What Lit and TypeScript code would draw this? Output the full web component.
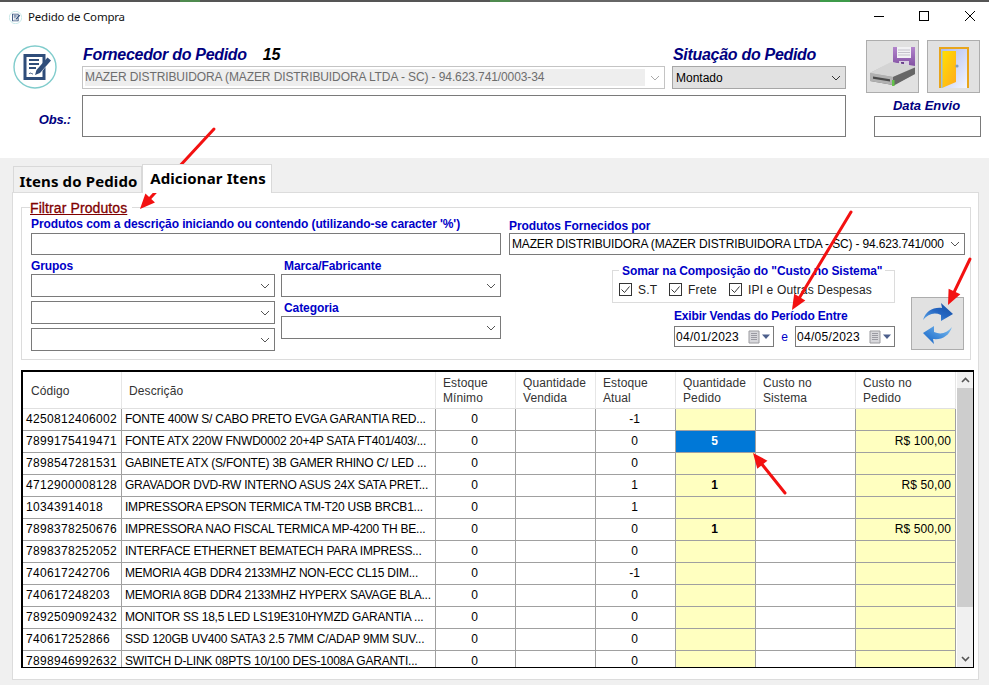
import { LitElement, html, css, svg } from "lit";
import { customElement } from "lit/decorators.js";

const chevron = (c = "#555") => html`<svg class="chev" width="10" height="6" viewBox="0 0 10 6"><path d="M1 1l4 4 4-4" fill="none" stroke=${c} stroke-width="1"/></svg>`;

const docIcon = (size: number) => html`<svg width=${size} height=${size} viewBox="0 0 44 44">
  <circle cx="22" cy="22" r="21" fill="#fff" stroke="#80cccc" stroke-width="1.4"/>
  <path d="M10.500 9h22v7l-3 3.500V12H13.500v20h16v-6l3-4v13h-22z" fill="#2f4d7a"/>
  <path d="M16 15h10M16 19h10M16 23h7" stroke="#2f4d7a" stroke-width="2"/>
  <path d="M22 30l1.500-5 11-12.500 3.500 3-11 12.500z" fill="#2f4d7a"/>
  <path d="M16 29c1.500-2 2.500 0 4 0" stroke="#2f4d7a" fill="none"/>
</svg>`;

const floppy = html`<svg width="53" height="53" viewBox="0 0 53 53">
  <defs>
    <linearGradient id="fp" x1="0" y1="0" x2="0" y2="1"><stop offset="0" stop-color="#b284cc"/><stop offset="1" stop-color="#7b4a9c"/></linearGradient>
    <linearGradient id="dr" x1="0" y1="0" x2="0" y2="1"><stop offset="0" stop-color="#e8e8e8"/><stop offset=".55" stop-color="#a9a9a9"/><stop offset="1" stop-color="#5e5e5e"/></linearGradient>
  </defs>
  <path d="M27 7h22v22H27z" fill="url(#fp)"/>
  <path d="M31 7h14v11H31z" fill="#f2f2f4"/>
  <path d="M32 10h12M32 12.500h12M32 15h12" stroke="#b9b6c2" stroke-width=".8"/>
  <path d="M33 21h10v8H33z" fill="#d8d0e0"/><path d="M35 22h3v6h-3z" fill="#6a3f8c"/>
  <path d="M4 33l21-11 24 4v8L27 45 4 41z" fill="url(#dr)"/>
  <path d="M4 33l21-11 24 5-22 10z" fill="#d4d4d4"/>
  <path d="M4 33l23 4v8L4 41z" fill="#b0b0b0"/>
  <path d="M27 37l22-9.500v6.500L27 46z" fill="#666"/>
  <path d="M7 36.500l17 2.800v2.200L7 38.800z" fill="#4a4a4a"/>
  <path d="M26 40h2.500v6H26z" fill="#62c24a"/>
</svg>`;

const door = html`<svg width="53" height="53" viewBox="0 0 53 53">
  <defs>
    <linearGradient id="sky" x1="0" y1="0" x2="1" y2="1"><stop offset="0" stop-color="#a9b8f0"/><stop offset="1" stop-color="#f4f6ff"/></linearGradient>
    <linearGradient id="dp" x1="0" y1="0" x2="1" y2="1"><stop offset="0" stop-color="#ffe000"/><stop offset="1" stop-color="#ffa820"/></linearGradient>
  </defs>
  <path d="M13 8h28v40H13z" fill="url(#sky)"/>
  <path d="M12 7h30v41h-2V9H14v39h-2z" fill="#e8a51c"/>
  <path d="M15 11l14 0v31l-14 6z" fill="url(#dp)"/>
  <path d="M14 11h1.500v37H14z" fill="#9fc0dc"/>
  <circle cx="30" cy="26" r="1.600" fill="#7f9ec0"/>
</svg>`;

const refresh = html`<svg width="53" height="53" viewBox="0 0 53 53">
  <defs>
    <linearGradient id="ra" x1="0" y1="1" x2="1" y2="0"><stop offset="0" stop-color="#5ea8ea"/><stop offset=".5" stop-color="#2566c2"/><stop offset="1" stop-color="#154c9e"/></linearGradient>
    <linearGradient id="rb" x1="1" y1="0" x2="0" y2="1"><stop offset="0" stop-color="#7fc0f2"/><stop offset="1" stop-color="#0f5fc4"/></linearGradient>
  </defs>
  <path d="M12 23C15 14 22 10 31 11L30 6 42 17 30 24 30 18C23 15 17 17 12 23Z" fill="url(#ra)"/>
  <path d="M41 30C38 39 31 43 22 42L23 47 12 36 23 29 23 35C30 38 36 36 41 30Z" fill="url(#rb)"/>
</svg>`;

const calendar = html`<svg width="23" height="14" viewBox="0 0 23 14">
  <path d="M1 1h10v12H1z" fill="#d8d8dc" stroke="#9c9ca0"/>
  <path d="M3 3.500h6M3 5.500h6M3 7.500h6M3 9.500h6" stroke="#9a9aa2"/>
  <path d="M14 4.500h8l-4 4.500z" fill="#4c5f8c"/>
</svg>`;

const rows: string[][] = [
  ["4250812406002", "FONTE 400W S/ CABO PRETO EVGA GARANTIA RED...", "0", "", "-1", "", "", ""],
  ["7899175419471", "FONTE ATX 220W FNWD0002 20+4P SATA FT401/403/...", "0", "", "0", "5", "", "R$ 100,00"],
  ["7898547281531", "GABINETE ATX (S/FONTE) 3B GAMER RHINO C/ LED ...", "0", "", "0", "", "", ""],
  ["4712900008128", "GRAVADOR DVD-RW INTERNO ASUS 24X SATA PRET...", "0", "", "1", "1", "", "R$ 50,00"],
  ["10343914018", "IMPRESSORA EPSON TERMICA TM-T20 USB BRCB1...", "0", "", "1", "", "", ""],
  ["7898378250676", "IMPRESSORA NAO FISCAL TERMICA MP-4200 TH BE...", "0", "", "0", "1", "", "R$ 500,00"],
  ["7898378252052", "INTERFACE ETHERNET BEMATECH PARA IMPRESS...", "0", "", "0", "", "", ""],
  ["740617242706", "MEMORIA 4GB DDR4 2133MHZ NON-ECC CL15 DIM...", "0", "", "-1", "", "", ""],
  ["740617248203", "MEMORIA 8GB DDR4 2133MHZ HYPERX SAVAGE BLA...", "0", "", "0", "", "", ""],
  ["7892509092432", "MONITOR SS 18,5 LED LS19E310HYMZD GARANTIA ...", "0", "", "0", "", "", ""],
  ["740617252866", "SSD 120GB UV400 SATA3 2.5 7MM C/ADAP 9MM SUV...", "0", "", "0", "", "", ""],
  ["7898946992632", "SWITCH D-LINK 08PTS 10/100 DES-1008A GARANTI...", "0", "", "0", "", "", ""],
];

const heads: [string, string][] = [
  ["Código", ""], ["Descrição", ""], ["Estoque", "Mínimo"], ["Quantidade", "Vendida"],
  ["Estoque", "Atual"], ["Quantidade", "Pedido"], ["Custo no", "Sistema"], ["Custo no", "Pedido"],
];

const arrow = (x1: number, y1: number, x2: number, y2: number) => {
  const a = Math.atan2(y2 - y1, x2 - x1);
  const L = 15, W = 6.5;
  const bx = x2 - Math.cos(a) * L, by = y2 - Math.sin(a) * L;
  const nx = -Math.sin(a) * W, ny = Math.cos(a) * W;
  return svg`<line x1=${x1} y1=${y1} x2=${bx} y2=${by} stroke="#f31111" stroke-width="3" stroke-linecap="round"/>
    <polygon points="${x2},${y2} ${bx + nx},${by + ny} ${bx - nx},${by - ny}" fill="#f31111"/>`;
};

@customElement("app-root")
export class AppRoot extends LitElement {
  static styles = css`
    :host { display: block; position: relative; width: 989px; height: 685px; overflow: hidden; background: #f0f0f0; font-family: "Liberation Sans", Arial, sans-serif; font-size: 12px; color: #000; }
    .strip { height: 2px; background: linear-gradient(90deg, #555 0 180px, #4f8a4f 180px 200px, #555 200px 490px, #4f8a4f 490px 510px, #666 510px 820px, #3e9a4a 820px 850px, #555 850px 100%); }
    .titlebar { height: 31px; background: #fff; display: flex; align-items: center; padding-left: 9px; font-family: "Noto Sans", sans-serif; font-size: 11.5px; color: #111; }
    .titlebar .t { margin: 0 0 2px 6px; letter-spacing: -.2px; }
    .ctrls { margin-left: auto; display: flex; }
    .ctrls svg { display: block; width: 46px; height: 31px; }
    .header { height: 125px; background: #fff; display: flex; align-items: flex-start; padding-top: 7px; box-sizing: border-box; }
    .hgrid { width: 846px; display: grid; grid-template-columns: 82px 583px 181px; grid-template-rows: 26px 23px 48px; }
    .logo { grid-column: 1; grid-row: 1 / 3; align-self: end; margin-left: 13px; height: 44px; }
    .logo svg { display: block; }
    .hl { font-weight: bold; font-style: italic; font-size: 16px; letter-spacing: -.3px; color: #000080; align-self: end; line-height: 22px; padding-left: 1px; }
    .hl b { color: #000; margin-left: 16px; }
    .st { margin-left: 7px; grid-column: 3; grid-row: 1; white-space: nowrap; }
    .f1 { grid-column: 2; grid-row: 1; }
    .sup { grid-column: 2; grid-row: 2; height: 23px; box-sizing: border-box; border: 1px solid #c4c4c4; display: flex; align-items: center; color: #6d6d6d; padding: 2px; position: relative; letter-spacing: -.1px; }
    .sup span { flex: 1; background: #eee; height: 17px; line-height: 17px; white-space: nowrap; overflow: hidden; margin-right: 17px; }
    .sit { grid-column: 3; grid-row: 2; margin-left: 7px; height: 23px; box-sizing: border-box; border: 1px solid #a6a6a6; background: #e1e1e1; display: flex; align-items: center; padding-left: 3px; }
    .chev { margin-left: auto; margin-right: 4px; flex: none; }
    .sup .chev { position: absolute; right: 4px; margin: 0; }
    .obsl { grid-column: 1; grid-row: 3; align-self: center; justify-self: end; margin-right: 11px; font-weight: bold; font-style: italic; font-size: 13px; letter-spacing: -.2px; color: #000080; margin-top: 12px; }
    .obs { grid-column: 2 / 4; grid-row: 3; margin-top: 6px; border: 1px solid #7a7a7a; box-sizing: border-box; background: #fff; }
    .hright { margin-left: 20px; width: 115px; }
    .btns { display: flex; gap: 8px; }
    .btn { width: 53px; height: 53px; box-sizing: border-box; background: #e1e1e1; border: 1px solid #adadad; display: block; flex: none; }
    .btn svg { display: block; margin: -1px; }
    .de { font-weight: bold; font-style: italic; font-size: 13px; color: #000080; text-align: center; line-height: 25px; height: 23px; margin-left: 7px; width: 107px; }
    .deb { width: 107px; height: 21px; box-sizing: border-box; border: 1px solid #7a7a7a; margin-left: 8px; background: #fff; }
    .tabs { display: flex; align-items: flex-end; height: 34px; padding-left: 13px; }
    .tab { font-family: "Noto Sans", sans-serif; font-weight: bold; font-size: 15px; letter-spacing: .12px; box-sizing: border-box; border: 1px solid #d9d9d9; border-bottom: 0; text-align: center; color: #000; padding-left: 2px; }
    .tab.off { width: 129px; height: 26px; line-height: 28px; background: #f0f0f0; }
    .tab.on { width: 130px; height: 29px; line-height: 26px; background: #fff; margin-bottom: -1px; position: relative; z-index: 1; }
    .panel { margin-left: 12px; width: 967px; height: 488px; box-sizing: border-box; border: 1px solid #dcdcdc; background: #fff; padding: 14px 0 0 8px; }
    .box { border: 1px solid #dcdcdc; box-sizing: border-box; }
    .legend { background: #fff; width: fit-content; }
    .filter { width: 950px; height: 153px; padding-left: 9px; }
    .legend.lf { margin-top: -8px; height: 16px; line-height: 17px; color: #800000; font-size: 14px; letter-spacing: .1px; -webkit-text-stroke: .3px #800000; text-decoration: underline; padding-right: 5px; margin-left: -1px; }
    .fg { display: grid; grid-template-columns: 470px 456px; column-gap: 8px; }
    .bl { color: #0000c8; font-weight: bold; font-size: 12px; letter-spacing: -.09px; white-space: nowrap; }
    .l1 { height: 17px; line-height: 16px; }
    .l2 { height: 19px; line-height: 23px; padding-left: 3px; }
    .l2.nopad { padding-left: 0; }
    .lr { height: 17px; line-height: 20px; }
    .inp { height: 22px; border: 1px solid #7a7a7a; box-sizing: border-box; background: #fff; }
    .combo { height: 23px; border: 1px solid #7a7a7a; box-sizing: border-box; background: #fff; display: flex; align-items: center; white-space: nowrap; overflow: hidden; }
    .combo.g { margin-bottom: 4px; }
    .combo.fp { height: 22px; padding-left: 2px; font-size: 12px; letter-spacing: -.16px; }
    .combo.fp span { flex: 1; white-space: nowrap; }
    .combo.fp .chev { margin-left: 4px; }
    .two { display: grid; grid-template-columns: 244px 220px; column-gap: 6px; }
    .lower { display: flex; padding-left: 103px; }
    .lc { width: 283px; }
    .somar { margin-top: 15px; height: 33px; width: 283px; padding-left: 6px; }
    .legend.ls { margin-top: -8px; height: 16px; line-height: 16px; padding: 0 3px; margin-bottom: 4px; }
    .checks { display: grid; grid-template-columns: 50px 60px auto; letter-spacing: .15px; }
    .ck { display: flex; gap: 6px; align-items: center; height: 13px; white-space: nowrap; color: #222; }
    .ck svg { display: block; flex: none; }
    .ex { height: 23px; line-height: 26px; padding-left: 62px; letter-spacing: -.17px; }
    .dates { display: flex; align-items: center; padding-left: 62px; }
    .date { width: 100px; height: 21px; box-sizing: border-box; border: 1px solid #7a7a7a; display: flex; align-items: center; padding-left: 1px; font-size: 12px; letter-spacing: .3px; }
    .date svg { margin-left: auto; margin-right: 2px; }
    .e { width: 21px; text-align: center; color: #0000c8; }
    .ref { margin: 42px 0 0 16px; }
    .table { margin-top: 10px; width: 953px; height: 298px; box-sizing: border-box; border-style: solid; border-color: #000; border-width: 2px 1px 1px 2px; display: flex; overflow: hidden; background: #fff; }
    .grid { width: 933px; flex: none; overflow: hidden; }
    .row { display: grid; grid-template-columns: 99px 314px 80px 80px 80px 80px 100px 100px; height: 22px; }
    .row.head { height: 37px; }
    .c { box-sizing: border-box; border-right: 1px solid #a0a0a0; border-bottom: 1px solid #a0a0a0; line-height: 21px; white-space: nowrap; overflow: hidden; }
    .head .c { border-right-color: #e6e6e6; border-bottom-color: #e0e0e0; color: #333; line-height: 15px; padding: 2px 0 0 7px; display: flex; flex-direction: column; justify-content: center; letter-spacing: .1px; }
    .head .c:first-child { padding-left: 8px; }
    .c.code { padding-left: 3px; letter-spacing: .33px; }
    .c.desc { padding-left: 3px; letter-spacing: -.22px; }
    .c.num { text-align: center; padding-right: 2px; }
    .c.y { background: #ffffc0; }
    .c.qty { text-align: center; font-weight: bold; padding-right: 2px; }
    .c.sel { background: #0078d7; color: #fff; }
    .c.mon { text-align: right; padding-right: 4px; letter-spacing: .1px; }
    .sb { flex: 1; border-left: 1px solid #fff; background: #f0f0f0; display: flex; flex-direction: column; }
    .sbb { height: 16px; flex: none; display: flex; align-items: center; justify-content: center; }
    .thumb { height: 219px; background: #cdcdcd; flex: none; }
    .sbf { flex: 1; }
    .arrows { position: absolute; left: 0; top: 0; pointer-events: none; }
  `;

  private cell(r: string[], i: number) {
    const v = r[i];
    if (i === 0) return html`<div class="c code">${v}</div>`;
    if (i === 1) return html`<div class="c desc">${v}</div>`;
    if (i === 5) return html`<div class="c qty ${v === "5" ? "sel" : "y"}">${v}</div>`;
    if (i === 7) return html`<div class="c mon y">${v}</div>`;
    return html`<div class="c num">${v}</div>`;
  }

  private check(label: string) {
    return html`<div class="ck"><svg width="13" height="13" viewBox="0 0 13 13"><rect x=".5" y=".5" width="12" height="12" fill="#fff" stroke="#333"/><path d="M2.500 6.500l3 3 5-6" fill="none" stroke="#333"/></svg>${label}</div>`;
  }

  render() {
    return html`
      <div class="strip"></div>
      <div class="titlebar">
        ${docIcon(13)}<span class="t">Pedido de Compra</span>
        <div class="ctrls">
          <svg viewBox="0 0 46 31"><path d="M23 14.500h10" stroke="#000"/></svg>
          <svg viewBox="0 0 46 31"><rect x="22.500" y="9.500" width="9" height="9" fill="none" stroke="#000"/></svg>
          <svg viewBox="0 0 46 31"><path d="M22 9l10 10M32 9L22 19" stroke="#000"/></svg>
        </div>
      </div>
      <div class="header">
        <div class="hgrid">
          <div class="logo">${docIcon(44)}</div>
          <div class="hl f1">Fornecedor do Pedido<b>15</b></div>
          <div class="hl st">Situação do Pedido</div>
          <div class="sup"><span>MAZER DISTRIBUIDORA (MAZER DISTRIBUIDORA LTDA - SC) - 94.623.741/0003-34</span>${chevron("#aaa")}</div>
          <div class="sit">Montado${chevron("#333")}</div>
          <div class="obsl">Obs.:</div>
          <div class="obs"></div>
        </div>
        <div class="hright">
          <div class="btns"><div class="btn">${floppy}</div><div class="btn">${door}</div></div>
          <div class="de">Data Envio</div>
          <div class="deb"></div>
        </div>
      </div>
      <div class="tabs"><div class="tab off">Itens do Pedido</div><div class="tab on">Adicionar Itens</div></div>
      <div class="panel">
        <div class="box filter">
          <div class="legend lf">Filtrar Produtos</div>
          <div class="fg">
            <div>
              <div class="bl l1">Produtos com a descrição iniciando ou contendo (utilizando-se caracter '%')</div>
              <div class="inp"></div>
              <div class="two">
                <div>
                  <div class="bl l2 nopad">Grupos</div>
                  <div class="combo g">${chevron()}</div>
                  <div class="combo g">${chevron()}</div>
                  <div class="combo">${chevron()}</div>
                </div>
                <div>
                  <div class="bl l2">Marca/Fabricante</div>
                  <div class="combo">${chevron()}</div>
                  <div class="bl l2">Categoria</div>
                  <div class="combo">${chevron()}</div>
                </div>
              </div>
            </div>
            <div>
              <div class="bl lr">Produtos Fornecidos por</div>
              <div class="combo fp"><span>MAZER DISTRIBUIDORA (MAZER DISTRIBUIDORA LTDA - SC) - 94.623.741/000</span>${chevron()}</div>
              <div class="lower">
                <div class="lc">
                  <div class="box somar">
                    <div class="legend ls bl">Somar na Composição do "Custo no Sistema"</div>
                    <div class="checks">${this.check("S.T")}${this.check("Frete")}${this.check("IPI e Outras Despesas")}</div>
                  </div>
                  <div class="bl ex">Exibir Vendas do Período Entre</div>
                  <div class="dates">
                    <div class="date">04/01/2023${calendar}</div>
                    <div class="e">e</div>
                    <div class="date">04/05/2023${calendar}</div>
                  </div>
                </div>
                <div class="btn ref">${refresh}</div>
              </div>
            </div>
          </div>
        </div>
        <div class="table">
          <div class="grid">
            <div class="row head">${heads.map(([a, b]) => html`<div class="c"><span>${a}</span>${b ? html`<span>${b}</span>` : ""}</div>`)}</div>
            ${rows.map((r) => html`<div class="row">${r.map((_, i) => this.cell(r, i))}</div>`)}
          </div>
          <div class="sb">
            <div class="sbb"><svg width="9" height="6" viewBox="0 0 9 6"><path d="M1 5l3.500-3.500L8 5" fill="none" stroke="#555" stroke-width="1.600"/></svg></div>
            <div class="thumb"></div>
            <div class="sbf"></div>
            <div class="sbb"><svg width="9" height="6" viewBox="0 0 9 6"><path d="M1 1l3.500 3.500L8 1" fill="none" stroke="#555" stroke-width="1.600"/></svg></div>
          </div>
        </div>
      </div>
      <svg class="arrows" width="989" height="685" viewBox="0 0 989 685">
        ${arrow(214, 129, 140, 209)}
        ${arrow(851, 212, 792, 310)}
        ${arrow(970, 259, 948, 305)}
        ${arrow(785, 493, 753, 453)}
      </svg>
    `;
  }
}
